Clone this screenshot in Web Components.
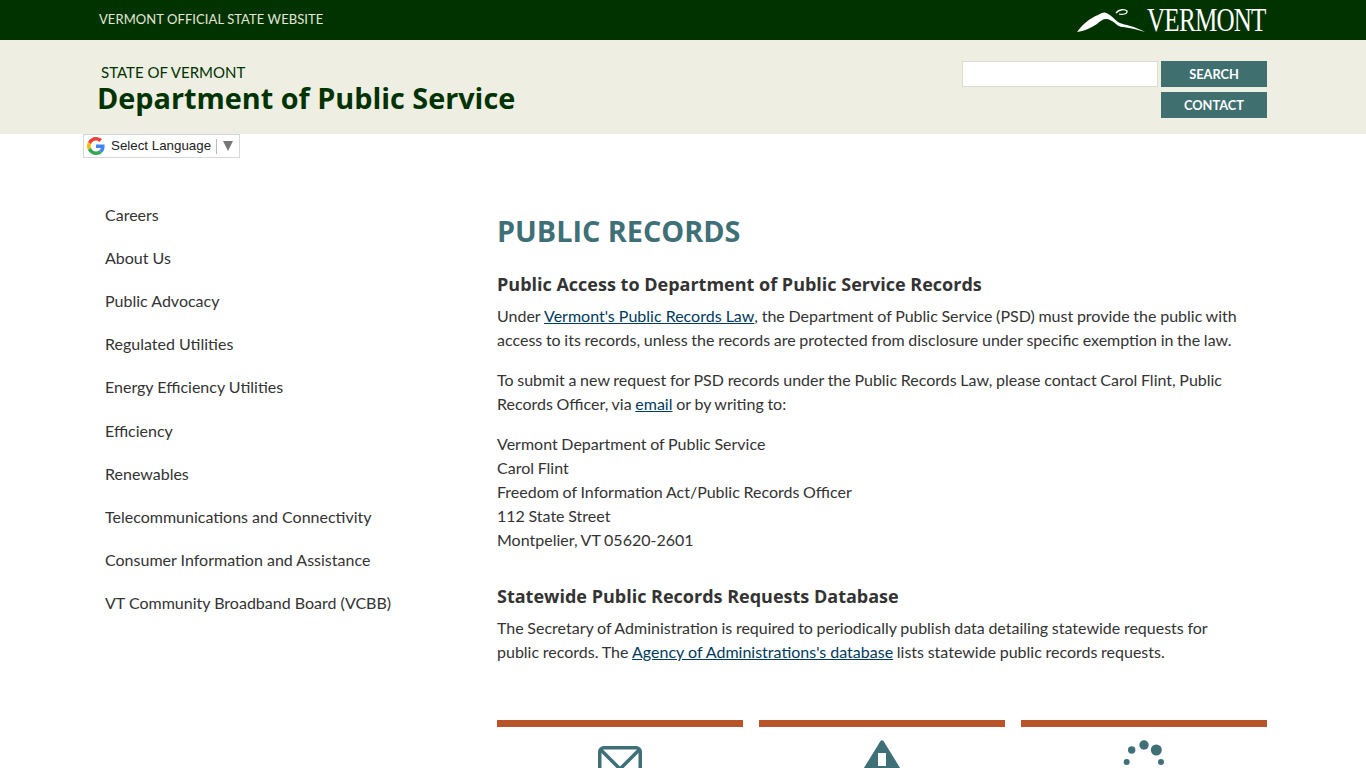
<!DOCTYPE html>
<html lang="en">
<head>
<meta charset="utf-8">
<title>Public Records</title>
<style>
  html, body { margin: 0; padding: 0; background: #fff; }
  body { font-family: Lato, sans-serif; color: #333; overflow: hidden; height: 768px; }
</style>
</head>
<body>
<site-topbar></site-topbar>
<site-header></site-header>
<lang-select></lang-select>
<page-body>
  <side-nav slot="nav"></side-nav>
  <records-article slot="main"></records-article>
</page-body>

<script>
class SiteTopbar extends HTMLElement {
  constructor() {
    super();
    this.attachShadow({ mode: 'open' }).innerHTML = `
    <style>
    :host { display: block; background: #003300; height: 40px; }
    .inner { width: 1168px; margin-inline-start: 99px; height: 40px; display: flex; align-items: center; justify-content: space-between; }
    .label { color: #e6e6d8; font-size: 13px; letter-spacing: 0.07px; margin-block-end: 2px; }
    .logo { display: flex; align-items: center; gap: 2px; color: #fff; }
    .word { display: block; width: 120px; font: 33px/40px 'Liberation Serif', serif; letter-spacing: -1px; transform: scaleX(.76); transform-origin: left; white-space: nowrap; }
    svg { width: 67px; height: 24px; overflow: visible; }
    </style>
    <div class="inner">
      <span class="label">VERMONT OFFICIAL STATE WEBSITE</span>
      <span class="logo">
        <svg viewBox="0 0 67 24"><path fill="#fff" d="M-1 24C4 17 12 10 20 7C23 5 26 4 28 5C32 6 36 11 40 14C45 17 48 16 52 18C57 19 63 22 67 24C60 22 54 20 48 19.500C44 19 41 19 38 16C35 13 31 11 28 11C25 11 22 13 19 16C13 20 6 23-1 24z"/><path fill="none" stroke="#fff" stroke-width="1.300" d="M38 5C41 1 47 1 49 3C50 6 44 7 41 6"/></svg>
        <span class="word">VERMONT</span>
      </span>
    </div>`;
  }
}

class SiteHeader extends HTMLElement {
  constructor() {
    super();
    this.attachShadow({ mode: 'open' }).innerHTML = `
    <style>
    :host { display: block; background: #eeeee2; height: 94px; }
    .inner { width: 1170px; margin-inline-start: 97px; display: flex; justify-content: space-between; height: 94px; }
    .titles { padding-block-start: 24px; }
    .state { color: #003300; font-size: 15px; line-height: 16px; padding-inline-start: 4px; }
    h1 { margin: 0; color: #003300; font: bold 28.8px/36px 'Open Sans', sans-serif; }
    .tools { display: grid; grid-template-columns: 196px 106px; gap: 5px 3px; padding-block-start: 21px; align-content: start; }
    input { box-sizing: border-box; width: 196px; height: 26px; border: 1px solid #dddccb; background: #fff; padding: 0; }
    .btn { background: #406f70; color: #fff; font-size: 12.8px; font-weight: bold; text-align: center; line-height: 26px; height: 26px; }
    .contact { grid-column: 2; }
    </style>
    <div class="inner">
      <div class="titles">
        <div class="state">STATE OF VERMONT</div>
        <h1>Department of Public Service</h1>
      </div>
      <div class="tools">
        <input type="text" aria-label="Search">
        <div class="btn">SEARCH</div>
        <div class="btn contact">CONTACT</div>
      </div>
    </div>`;
  }
}

class LangSelect extends HTMLElement {
  constructor() {
    super();
    this.attachShadow({ mode: 'open' }).innerHTML = `
    <style>
    :host { display: block; height: 24px; padding-inline-start: 83px; }
    .box { box-sizing: border-box; width: 157px; height: 24px; border: 1px solid #d5d9dd; display: flex; align-items: center; padding-inline-start: 3px; font: 13.33px 'Liberation Sans', sans-serif; color: #222; }
    svg { width: 18px; height: 18px; margin-inline-end: 6px; }
    .text { margin-block-end: 2px; }
    .sep { width: 1px; height: 15px; background: #bbb; margin-inline: 5px 6px; }
    .arrow { width: 0; height: 0; border-inline: 5px solid transparent; border-block-start: 10px solid #777; }
    </style>
    <div class="box">
      <svg viewBox="0 0 48 48"><path fill="#EA4335" d="M24 9.500c3.500 0 6.600 1.200 9.100 3.600l6.800-6.800C35.800 2.400 30.300 0 24 0 14.600 0 6.500 5.400 2.600 13.200l7.900 6.100C12.400 13.700 17.700 9.500 24 9.500z"/><path fill="#4285F4" d="M46.900 24.500c0-1.600-.1-3.100-.4-4.500H24v9h12.900c-.6 3-2.200 5.500-4.700 7.200l7.600 5.900c4.400-4.100 7.100-10.200 7.100-17.600z"/><path fill="#FBBC05" d="M10.500 28.700c-.5-1.500-.8-3-.8-4.700s.3-3.200.8-4.700l-7.900-6.100C.9 16.500 0 20.100 0 24s.9 7.500 2.600 10.800l7.900-6.100z"/><path fill="#34A853" d="M24 48c6.500 0 11.900-2.100 15.900-5.900l-7.600-5.900c-2.100 1.400-4.900 2.300-8.300 2.300-6.300 0-11.600-4.200-13.500-9.900l-7.900 6.100C6.500 42.600 14.600 48 24 48z"/></svg>
      <span class="text">Select Language</span><span class="sep"></span><span class="arrow"></span>
    </div>`;
  }
}

class PageBody extends HTMLElement {
  constructor() {
    super();
    this.attachShadow({ mode: 'open' }).innerHTML = `
    <style>
    :host { display: block; }
    .wrap { width: 1162px; margin-inline-start: 105px; display: grid; grid-template-columns: 392px 770px; }
    </style>
    <div class="wrap"><slot name="nav"></slot><slot name="main"></slot></div>`;
  }
}

class SideNav extends HTMLElement {
  constructor() {
    super();
    const items = ['Careers', 'About Us', 'Public Advocacy', 'Regulated Utilities', 'Energy Efficiency Utilities', 'Efficiency', 'Renewables', 'Telecommunications and Connectivity', 'Consumer Information and Assistance', 'VT Community Broadband Board (VCBB)'];
    this.attachShadow({ mode: 'open' }).innerHTML = `
    <style>
    :host { display: block; padding-block-start: 44.9px; font-size: 16px; }
    ul { list-style: none; margin: 0; padding: 0; display: grid; row-gap: 19.15px; }
    li { line-height: 24px; color: #333; }
    </style>
    <ul>${items.map((t) => `<li>${t}</li>`).join('')}</ul>`;
  }
}

class InfoCard extends HTMLElement {
  constructor() {
    super();
    this.attachShadow({ mode: 'open' }).innerHTML = `
    <style>
    :host { display: block; border-block-start: 7px solid #b8532a; padding-block-start: 13px; text-align: center; height: 60px; }
    ::slotted(svg) { width: 48px; height: 48px; }
    </style>
    <slot></slot>`;
  }
}

class RecordsArticle extends HTMLElement {
  constructor() {
    super();
    this.attachShadow({ mode: 'open' }).innerHTML = `
    <style>
    :host { display: block; font-size: 16px; line-height: 24px; color: #333; }
    h1 { margin: 0; padding-block-start: 53px; font: bold 28.8px/40px 'Open Sans', sans-serif; color: #3f6f77; }
    h2 { margin: 0; font: bold 18px/24px 'Open Sans', sans-serif; color: #333; }
    p { margin: 0 0 16px; max-width: 745px; word-spacing: -0.42px; }
    a { color: #003a5d; word-spacing: 0; }
    .h2a { margin-block-start: 21px; margin-block-end: 8px; }
    .h2b { margin-block-start: 32px; margin-block-end: 8px; }
    .cards { display: grid; grid-template-columns: repeat(3, 1fr); gap: 16px; margin-block-start: 56px; }
    </style>
    <h1>PUBLIC RECORDS</h1>
    <h2 class="h2a">Public Access to Department of Public Service Records</h2>
    <p>Under <a href="#">Vermont's Public Records Law</a>, the Department of Public Service (PSD) must provide the public with access to its records, unless the records are protected from disclosure under specific exemption in the law.</p>
    <p>To submit a new request for PSD records under the Public Records Law, please contact Carol Flint, Public Records Officer, via <a href="#">email</a> or by writing to:</p>
    <p>Vermont Department of Public Service<br>Carol Flint<br>Freedom of Information Act/Public Records Officer<br>112 State Street<br>Montpelier, VT 05620-2601</p>
    <h2 class="h2b">Statewide Public Records Requests Database</h2>
    <p>The Secretary of Administration is required to periodically publish data detailing statewide requests for public records. The <a href="#">Agency of Administrations's database</a> lists statewide public records requests.</p>
    <div class="cards">
      <info-card><svg viewBox="0 0 48 48" fill="none" stroke="#3f6f77" stroke-width="3.500"><rect x="3.750" y="7.750" width="40.500" height="30" rx="4"/><path d="M5 10l19 19 19-19"/></svg></info-card>
      <info-card><svg viewBox="0 0 48 48"><path fill="#3f6f77" d="M22.500 1Q24-.5 25.500 1L47 36H1z"/><rect x="20" y="13" width="8" height="13" fill="#fff"/></svg></info-card>
      <info-card><svg viewBox="0 0 48 48" fill="#3f6f77"><circle cx="24" cy="5" r="4.700"/><circle cx="11.700" cy="10" r="3.700"/><circle cx="36.300" cy="10" r="5.500"/><circle cx="6.700" cy="22" r="3"/><circle cx="41" cy="22" r="3"/></svg></info-card>
    </div>`;
  }
}

customElements.define('site-topbar', SiteTopbar);
customElements.define('site-header', SiteHeader);
customElements.define('lang-select', LangSelect);
customElements.define('page-body', PageBody);
customElements.define('side-nav', SideNav);
customElements.define('info-card', InfoCard);
customElements.define('records-article', RecordsArticle);
</script>
</body>
</html>
